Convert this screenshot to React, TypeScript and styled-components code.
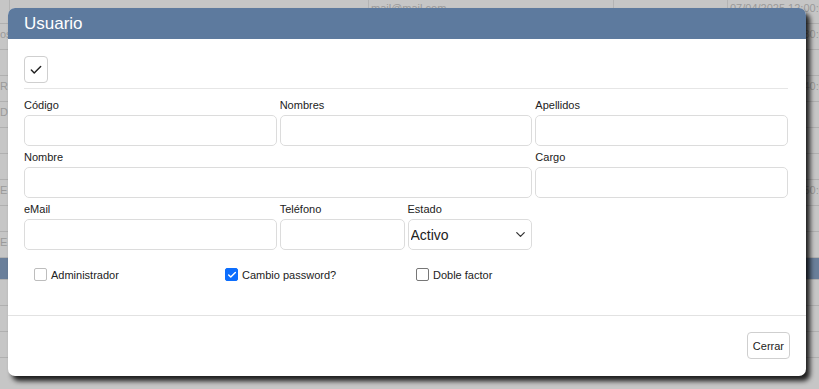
import React from 'react';
import styled, {createGlobalStyle} from 'styled-components';
import {Check, ChevronDown} from 'lucide-react';

const GlobalStyle = createGlobalStyle`
  html, body {
    margin: 0;
    padding: 0;
    width: 819px;
    height: 389px;
    overflow: hidden;
    font-family: "Liberation Sans", Arial, sans-serif;
    color: #212529;
  }
`;

type BgRowData = {cells: string[], band?: boolean}

// the table that sits behind the dialog overlay
const bgRows: BgRowData[] = [
    {cells: ['', '', 'mail@mail.com', '', '07/04/2025 12:00:00']},
    {cells: ['os', '', '', '', '07/04/2025 12:30:00']},
    {cells: ['', '', '', '', '']},
    {cells: ['R', '', '', '', '07/04/2025 12:40:00']},
    {cells: ['DE', '', '', '', '']},
    {cells: ['', '', '', '', '']},
    {cells: ['', '', '', '', '']},
    {cells: ['E', '', '', '', '07/04/2025 10:50:00']},
    {cells: ['', '', '', '', '']},
    {cells: ['E', '', '', '', '']},
    {cells: ['', '', '', '', ''], band: true},
    {cells: ['', '', '', '', '']},
    {cells: ['', '', '', '', '']},
    {cells: ['', '', '', '', '']},
];

export default function App() {
    return (
        <>
            <GlobalStyle/>
            <Page>
                <BgTable>
                    {bgRows.map((row, i) => (
                        <BgRow key={i} $band={row.band}>
                            {row.cells.map((c, j) => (
                                <BgCell key={j} $first={j === 0}>{c}</BgCell>
                            ))}
                        </BgRow>
                    ))}
                </BgTable>

                <Modal>
                    <Header>Usuario</Header>
                    <Body>
                        <Toolbar>
                            <IconButton title="Guardar">
                                <Check size={14} strokeWidth={2.5}/>
                            </IconButton>
                        </Toolbar>

                        <FormGrid>
                            <Field $span={2}>
                                <Label>Código</Label>
                                <Input/>
                            </Field>
                            <Field $span={2}>
                                <Label>Nombres</Label>
                                <Input/>
                            </Field>
                            <Field $span={2}>
                                <Label>Apellidos</Label>
                                <Input/>
                            </Field>

                            <Field $span={4}>
                                <Label>Nombre</Label>
                                <Input/>
                            </Field>
                            <Field $span={2}>
                                <Label>Cargo</Label>
                                <Input/>
                            </Field>

                            <Field $span={2}>
                                <Label>eMail</Label>
                                <Input/>
                            </Field>
                            <Field $span={1}>
                                <Label>Teléfono</Label>
                                <Input/>
                            </Field>
                            <Field $span={1}>
                                <Label>Estado</Label>
                                <SelectWrap>
                                    <Select defaultValue="Activo">
                                        <option>Activo</option>
                                        <option>Inactivo</option>
                                    </Select>
                                    <SelectArrow>
                                        <ChevronDown size={15} strokeWidth={2}/>
                                    </SelectArrow>
                                </SelectWrap>
                            </Field>
                        </FormGrid>

                        <Checks>
                            <CheckItem>
                                <Box/>
                                Administrador
                            </CheckItem>
                            <CheckItem>
                                <Box $checked>
                                    <Check size={10} strokeWidth={3.5} color="#fff"/>
                                </Box>
                                Cambio password?
                            </CheckItem>
                            <CheckItem>
                                <Box $dark/>
                                Doble factor
                            </CheckItem>
                        </Checks>
                    </Body>
                    <Footer>
                        <Button>Cerrar</Button>
                    </Footer>
                </Modal>
            </Page>
        </>
    )
}

const Page = styled.div`
  position: relative;
  width: 819px;
  height: 389px;
  overflow: hidden;
  background: #c6c6c6;
`;

const BgTable = styled.div`
  display: flex;
  flex-direction: column;
  margin-top: -2px;
`;

const BgRow = styled.div<{ $band?: boolean }>`
  display: grid;
  grid-template-columns: 9px 359px 245px 114px 92px;
  height: ${p => p.$band ? '21px' : '25px'};
  border-bottom: 1px solid #b0b0b0;
  background: ${p => p.$band ? '#6a7f9a' : 'transparent'};
`;

const BgCell = styled.div<{ $first?: boolean }>`
  border-left: ${p => p.$first ? 'none' : '1px solid #b4b4b4'};
  padding: 4px 2px;
  padding-left: ${p => p.$first ? '0' : '2px'};
  font-size: 11px;
  color: #9a9a9a;
  white-space: nowrap;
  overflow: hidden;
`;

const Modal = styled.div`
  position: absolute;
  left: 8px;
  top: 8px;
  width: 798px;
  height: 368px;
  display: flex;
  flex-direction: column;
  background: #fff;
  border-radius: 7px;
  box-shadow: 4px 5px 5px rgba(0, 0, 0, 0.85);
  overflow: hidden;
`;

const Header = styled.div`
  height: 31px;
  display: flex;
  align-items: center;
  padding: 0 16px;
  background: #5d7a9e;
  color: #fff;
  font-size: 17px;
`;

const Body = styled.div`
  flex: 1;
  padding: 17px 18px 0 16px;
`;

const Toolbar = styled.div`
  display: flex;
  padding-bottom: 5px;
  border-bottom: 1px solid #e6e6e6;
  margin-bottom: 9px;
`;

const IconButton = styled.button`
  width: 24px;
  height: 27px;
  display: flex;
  align-items: center;
  justify-content: center;
  padding: 0;
  background: #fff;
  border: 1px solid #cfcfcf;
  border-radius: 4px;
  color: #222;
`;

const FormGrid = styled.div`
  display: grid;
  grid-template-columns: repeat(6, 1fr);
  column-gap: 3px;
  row-gap: 4px;
`;

const Field = styled.div<{ $span: number }>`
  grid-column: span ${p => p.$span};
  display: flex;
  flex-direction: column;
`;

const Label = styled.label`
  font-size: 11px;
  line-height: 14px;
  margin-bottom: 3px;
  color: #222;
`;

const Input = styled.input`
  box-sizing: border-box;
  height: 31px;
  width: 100%;
  border: 1px solid #dcdcdc;
  border-radius: 5px;
  font-family: inherit;
  font-size: 13px;
  padding: 0 8px;
`;

const SelectWrap = styled.div`
  position: relative;
  height: 31px;
`;

const Select = styled.select`
  appearance: none;
  box-sizing: border-box;
  width: 100%;
  height: 31px;
  border: 1px solid #dcdcdc;
  border-radius: 5px;
  background: #fff;
  font-family: inherit;
  font-size: 14px;
  color: #222;
  padding: 0 2px;
`;

const SelectArrow = styled.span`
  position: absolute;
  right: 4px;
  top: 8px;
  color: #333;
  pointer-events: none;
`;

const Checks = styled.div`
  display: grid;
  grid-template-columns: repeat(4, 1fr);
  padding-top: 18px;
`;

const CheckItem = styled.label`
  display: flex;
  align-items: center;
  gap: 4px;
  padding-left: 10px;
  font-size: 11px;
  color: #222;
`;

const Box = styled.span<{ $checked?: boolean, $dark?: boolean }>`
  box-sizing: border-box;
  width: 13px;
  height: 13px;
  display: flex;
  align-items: center;
  justify-content: center;
  border-radius: 2px;
  border: 1px solid ${p => p.$checked ? '#0d6efd' : p.$dark ? '#777' : '#bdbdbd'};
  background: ${p => p.$checked ? '#0d6efd' : '#fff'};
`;

const Footer = styled.div`
  display: flex;
  justify-content: flex-end;
  padding: 16px 16px 17px;
  border-top: 1px solid #e2e2e2;
`;

const Button = styled.button`
  height: 27px;
  padding: 0 5px;
  background: #fff;
  border: 1px solid #cfcfcf;
  border-radius: 4px;
  font-family: inherit;
  font-size: 11px;
  color: #222;
`;
